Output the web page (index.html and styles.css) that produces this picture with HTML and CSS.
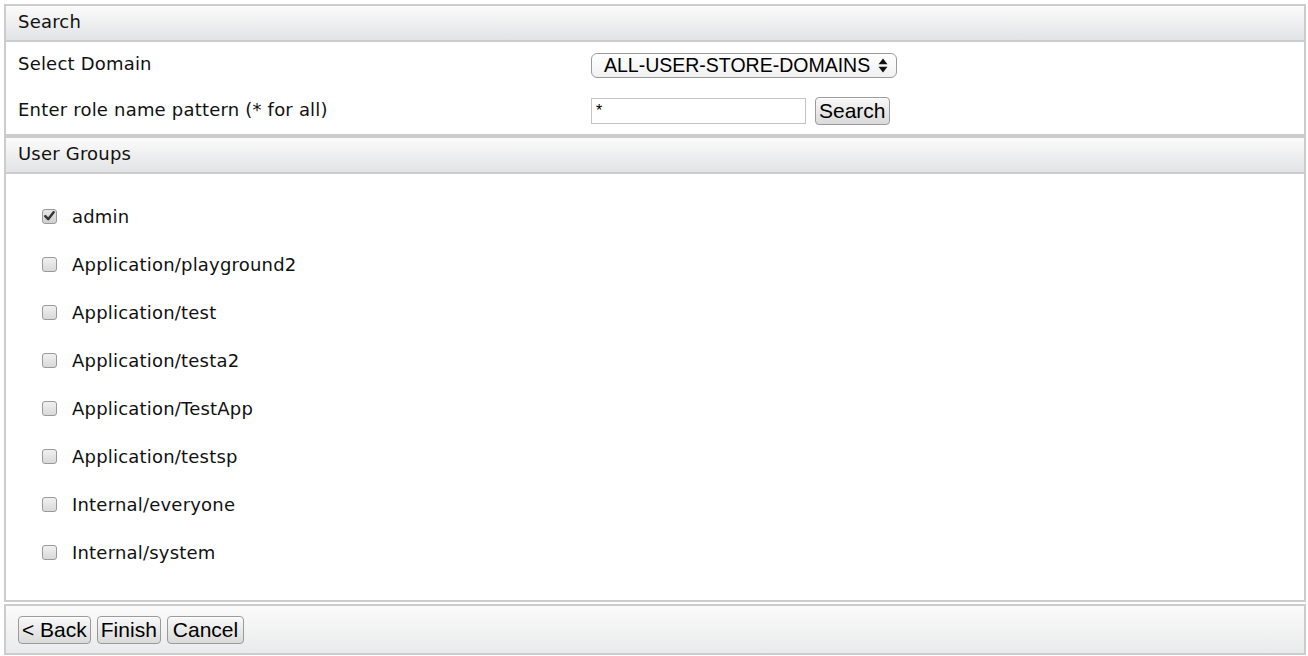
FILE: index.html
```html
<!DOCTYPE html>
<html>
<head>
<meta charset="utf-8">
<title>Select Groups</title>
<link rel="stylesheet" href="styles.css">
</head>
<body>
<div class="page">
  <section class="box search-box">
    <div class="head">Search</div>
    <div class="form">
      <div class="label">Select Domain</div>
      <div class="field">
        <div class="select"><span>ALL-USER-STORE-DOMAINS</span><svg class="arrows" width="10" height="15" viewBox="0 0 10 15"><path d="M5 0.5 L9.5 6.3 L0.5 6.3 Z M5 14.5 L9.5 8.7 L0.5 8.7 Z" fill="#111"/></svg></div>
      </div>
      <div class="label">Enter role name pattern (* for all)</div>
      <div class="field">
        <input class="text" type="text" value="*">
        <button class="btn" type="button">Search</button>
      </div>
    </div>
  </section>
  <section class="box groups-box">
    <div class="head">User Groups</div>
    <ul class="groups">
      <li><span class="cb checked"><svg width="11" height="10" viewBox="0 0 11 10"><path d="M1.3 5.2 L4.2 8.2 L9.6 1.2" fill="none" stroke="#333" stroke-width="2.4" stroke-linecap="round" stroke-linejoin="round"/></svg></span>admin</li>
      <li><span class="cb"></span>Application/playground2</li>
      <li><span class="cb"></span>Application/test</li>
      <li><span class="cb"></span>Application/testa2</li>
      <li><span class="cb"></span>Application/TestApp</li>
      <li><span class="cb"></span>Application/testsp</li>
      <li><span class="cb"></span>Internal/everyone</li>
      <li><span class="cb"></span>Internal/system</li>
    </ul>
  </section>
  <section class="box buttons-box">
    <button class="btn" type="button">&lt; Back</button>
    <button class="btn" type="button">Finish</button>
    <button class="btn wide" type="button">Cancel</button>
  </section>
</div>
</body>
</html>
```

FILE: styles.css
```css
html, body {
  margin: 0;
  padding: 0;
  background: #fff;
}
body {
  font-family: "DejaVu Sans", "Noto Sans", sans-serif;
  font-size: 18px;
  letter-spacing: 0.2px;
  color: #111;
}
.page {
  padding: 4px 2px 0 4px;
}
.box {
  border: 2px solid #cccccc;
  width: 1302px;
  box-sizing: border-box;
}
.head {
  height: 34px;
  line-height: 31px;
  padding-left: 12px;
  background: linear-gradient(#fbfbfb, #e2e3e5);
  border-bottom: 2px solid #cccccc;
}
.form {
  display: grid;
  grid-template-columns: 573px 1fr;
  grid-template-rows: 45px 47px;
  padding-left: 12px;
}
.label {
  display: flex;
  align-items: center;
  padding-bottom: 3px;
}
.field {
  display: flex;
  align-items: center;
  gap: 9px;
}
.select {
  width: 306px;
  height: 25px;
  box-sizing: border-box;
  border: 1px solid #9a9a9a;
  border-radius: 6px;
  background: linear-gradient(#ffffff, #f1f1f1);
  display: flex;
  align-items: center;
  justify-content: space-between;
  padding: 0 8px 0 12px;
  font-family: "Liberation Sans", Arial, sans-serif;
  font-size: 19.5px;
  letter-spacing: 0;
  color: #000;
  margin-top: 2px;
}
.arrows {
  display: block;
}
.text {
  width: 215px;
  height: 26px;
  box-sizing: border-box;
  border: 1px solid #c4c4c4;
  padding: 0 4px;
  font-family: "Liberation Sans", Arial, sans-serif;
  font-size: 16px;
  margin: 0;
  outline: none;
}
.btn {
  height: 28px;
  box-sizing: border-box;
  border: 1px solid #9a9a9a;
  border-radius: 4px;
  background: linear-gradient(#f8f8f8, #dadada);
  font-family: "Liberation Sans", Arial, sans-serif;
  font-size: 21px;
  line-height: 24px;
  letter-spacing: 0;
  color: #000;
  padding: 0 3px;
  margin: 0;
  box-shadow: inset 0 1px 0 #fff;
}
.btn.wide {
  padding: 0 5px;
}
.groups {
  list-style: none;
  margin: 0;
  padding: 18px 0 24px 0;
}
.groups li {
  height: 48px;
  display: flex;
  align-items: center;
  padding-left: 36px;
}
.cb {
  width: 15px;
  height: 15px;
  box-sizing: border-box;
  border: 1px solid #999;
  border-radius: 3px;
  background: linear-gradient(#f0f0f0, #d9d9d9);
  margin-right: 15px;
  display: flex;
  align-items: center;
  justify-content: center;
}
.cb.checked {
  background: linear-gradient(#e6e6e6, #cfcfcf);
}
.buttons-box {
  margin-top: 2px;
  height: 51px;
  padding: 0 12px;
  display: flex;
  align-items: center;
  gap: 6px;
  background: linear-gradient(#fbfbfb, #e9eaeb);
}
```
